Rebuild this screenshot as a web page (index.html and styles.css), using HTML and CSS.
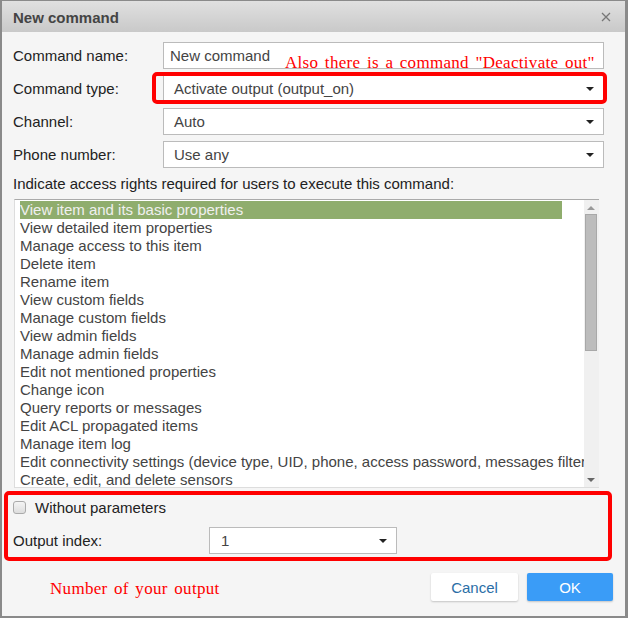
FILE: index.html
```html
<!DOCTYPE html>
<html lang="en">
<head>
    <meta charset="UTF-8">
    <title>New command</title>
    <link rel="stylesheet" href="styles.css">
</head>
<body>
    <div class="dialog">
        <div class="dialog-header">
            <span class="dialog-title">New command</span>
            <svg class="dialog-close" width="10" height="10" viewBox="0 0 10 10">
                <path d="M1 1 L9 9 M9 1 L1 9" stroke="#777" stroke-width="1.3" fill="none"/>
            </svg>
        </div>

        <div class="dialog-body">
            <div class="form-row">
                <label class="form-label">Command name:</label>
                <div class="field text-field">New command</div>
            </div>
            <div class="form-row">
                <label class="form-label">Command type:</label>
                <div class="field select-field">Activate output (output_on)<span class="caret"></span></div>
            </div>
            <div class="form-row">
                <label class="form-label">Channel:</label>
                <div class="field select-field">Auto<span class="caret"></span></div>
            </div>
            <div class="form-row">
                <label class="form-label">Phone number:</label>
                <div class="field select-field">Use any<span class="caret"></span></div>
            </div>

            <div class="rights-title">Indicate access rights required for users to execute this command:</div>

            <div class="listbox">
                <div class="listbox-items" id="rights-list"></div>
                <div class="scrollbar">
                    <span class="scroll-arrow up"></span>
                    <span class="scroll-thumb"></span>
                    <span class="scroll-arrow down"></span>
                </div>
            </div>

            <label class="check-row">
                <span class="checkbox"></span>
                Without parameters
            </label>

            <div class="form-row output-row">
                <label class="form-label">Output index:</label>
                <div class="field select-field short">1<span class="caret"></span></div>
            </div>

            <div class="dialog-footer">
                <button class="btn btn-cancel">Cancel</button>
                <button class="btn btn-ok">OK</button>
            </div>
        </div>

        <!-- annotations drawn on top of the screenshot -->
        <div class="note note-top">Also there is a command "Deactivate out"</div>
        <div class="mark mark-type"></div>
        <div class="mark mark-params"></div>
        <div class="note note-bottom">Number of your output</div>
    </div>

    <script>
        const rights = [
            'View item and its basic properties',
            'View detailed item properties',
            'Manage access to this item',
            'Delete item',
            'Rename item',
            'View custom fields',
            'Manage custom fields',
            'View admin fields',
            'Manage admin fields',
            'Edit not mentioned properties',
            'Change icon',
            'Query reports or messages',
            'Edit ACL propagated items',
            'Manage item log',
            'Edit connectivity settings (device type, UID, phone, access password, messages filter)',
            'Create, edit, and delete sensors'
        ];

        const list = document.getElementById('rights-list');
        rights.forEach((text, i) => {
            const item = document.createElement('div');
            item.className = i === 0 ? 'list-item selected' : 'list-item';
            item.textContent = text;
            list.appendChild(item);
        });
    </script>
</body>
</html>
```

FILE: styles.css
```css
body {
    margin: 0;
    padding: 1px 3px 0 2px;
    background-color: #8a8a8a;
    font-family: "Liberation Sans", Arial, sans-serif;
    font-size: 15px;
    color: #222;
}

.dialog {
    position: relative;
    width: 623px;
    height: 615px;
    background: #f5f5f5;
}

.dialog-header {
    height: 31px;
    display: flex;
    align-items: center;
    justify-content: space-between;
    padding: 1px 14px 0 11px;
    box-sizing: border-box;
    background: linear-gradient(#e0e0e0, #c9c9c9);
}

.dialog-title {
    font-weight: bold;
    font-size: 15px;
    color: #444;
}

.dialog-close {
    display: block;
}

.dialog-body {
    padding: 10px 21px 0 11px;
}

.form-row {
    display: flex;
    align-items: center;
    height: 27px;
    margin-bottom: 6px;
}

.form-label {
    width: 150px;
    flex-shrink: 0;
}

.field {
    position: relative;
    flex: 1;
    height: 25px;
    line-height: 25px;
    border: 1px solid #bbb;
    background: #fff;
    color: #444;
    padding-left: 6px;
}

.select-field {
    padding-left: 10px;
}

.caret {
    position: absolute;
    right: 9px;
    top: 11px;
    border-left: 4px solid transparent;
    border-right: 4px solid transparent;
    border-top: 4px solid #222;
}

.rights-title {
    margin-top: 7px;
    line-height: 18px;
}

.listbox {
    display: flex;
    width: 584px;
    height: 287px;
    margin: 6px 0 0 1px;
    border-top: 1px solid #aaa;
    border-left: 1px solid #ddd;
    border-bottom: 1px solid #ddd;
    background: #fff;
}

.listbox-items {
    flex: 1;
    overflow: hidden;
    padding: 1px 0 0 5px;
}

.list-item {
    width: 542px;
    height: 18px;
    line-height: 18px;
    white-space: nowrap;
    color: #444;
}

.list-item.selected {
    background: #8fad6d;
    color: #f0f0f0;
}

.scrollbar {
    position: relative;
    width: 15px;
    background: #f0f0f0;
}

.scroll-arrow {
    position: absolute;
    left: 3px;
    border-left: 4px solid transparent;
    border-right: 4px solid transparent;
}

.scroll-arrow.up {
    top: 6px;
    border-bottom: 4px solid #999;
}

.scroll-arrow.down {
    bottom: 5px;
    border-top: 4px solid #666;
}

.scroll-thumb {
    position: absolute;
    left: 1px;
    top: 14px;
    width: 10px;
    height: 135px;
    background: #bcbcbc;
    border: 1px solid #a8a8a8;
}

.check-row {
    display: flex;
    align-items: center;
    gap: 9px;
    height: 20px;
    margin-top: 9px;
}

.checkbox {
    width: 11px;
    height: 11px;
    border: 1px solid #aaa;
    border-radius: 3px;
    background: linear-gradient(#f4f4f4, #ddd);
}

.output-row {
    margin-top: 10px;
}

.output-row .form-label {
    width: 196px;
}

.field.short {
    flex: none;
    width: 175px;
    padding-left: 11px;
}

.dialog-footer {
    display: flex;
    justify-content: flex-end;
    gap: 9px;
    margin: 19px -9px 0 0;
}

.btn {
    height: 28px;
    border: none;
    border-radius: 2px;
    font-family: "Liberation Sans", Arial, sans-serif;
    font-size: 15px;
    box-shadow: 0 1px 2px rgba(0, 0, 0, 0.2);
}

.btn-cancel {
    width: 87px;
    background: #fff;
    color: #2a6ea6;
}

.btn-ok {
    width: 86px;
    background: #3a9cf7;
    color: #fff;
}

.note {
    position: absolute;
    font-family: "Liberation Serif", "Times New Roman", serif;
    font-size: 17px;
    color: #f00;
    word-spacing: 2px;
    letter-spacing: 0.3px;
}

.note-top {
    left: 283px;
    top: 52px;
}

.note-bottom {
    left: 48px;
    top: 578px;
}

.mark {
    position: absolute;
    border: 4px solid #f00;
    border-radius: 5px;
}

.mark-type {
    left: 150px;
    top: 71px;
    width: 447px;
    height: 24px;
}

.mark-params {
    left: 2px;
    top: 490px;
    width: 600px;
    height: 62px;
}
```
